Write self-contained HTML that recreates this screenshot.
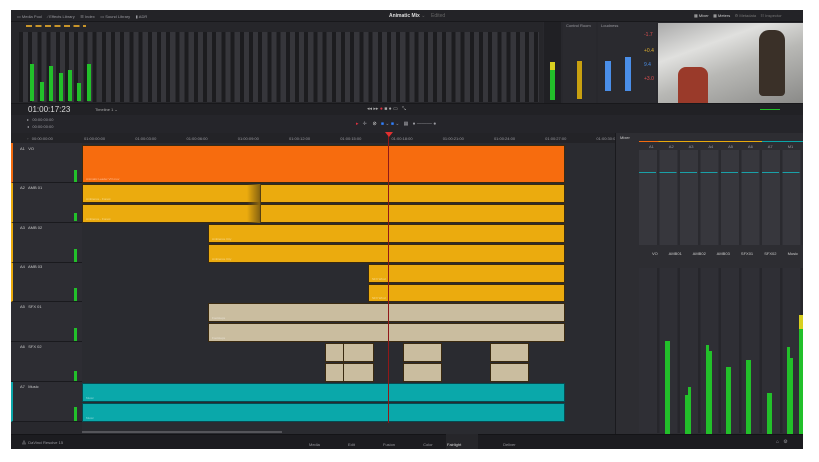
<!DOCTYPE html><html><head><meta charset="utf-8"><style>
*{margin:0;padding:0;box-sizing:border-box}
body{width:819px;height:462px;background:#fff;position:relative;overflow:hidden;font-family:"Liberation Sans",sans-serif;font-size:4px;color:#8a8a90}
div{position:absolute}
.app{left:11px;top:10px;width:792px;height:439px;background:#28282d;overflow:hidden}
.t{color:#9a9aa0;font-size:4px;white-space:nowrap}
.clip{border:1px solid #3a2a10}
.lbl{position:absolute;left:3px;bottom:1px;font-size:3px;color:#fff8;white-space:nowrap}
.g{background:#22c02a}
.hdr{left:0;width:71px;background:#2d2d33;border-bottom:1px solid #1a1a1e}
</style></head><body>
<div class="app">
 <div style="left:0;top:0;width:792px;height:12px;background:#232327;border-bottom:1px solid #18181b"></div>
 <div class="t" style="left:6px;top:4px">▭ Media Pool &nbsp;&nbsp;&nbsp; ⁄ Effects Library &nbsp;&nbsp;&nbsp; ☰ Index &nbsp;&nbsp;&nbsp; ▭ Sound Library &nbsp;&nbsp;&nbsp; ▮ ADR</div>
 <div class="t" style="left:378px;top:3px;color:#ddd;font-weight:bold;font-size:5px">Animatic Mix <span style="color:#666;font-weight:normal">⌄ &nbsp;&nbsp; Edited</span></div>
 <div class="t" style="left:683px;top:3px;color:#ccc">▦ Mixer &nbsp;&nbsp; ▦ Meters &nbsp;&nbsp;<span style="color:#777"> ⚙ Metadata &nbsp;&nbsp; ☷ Inspector</span></div>
 <div style="left:0;top:12px;width:532px;height:81px;background:#26262a"></div>
 <div style="left:8px;top:22px;width:520px;height:70px;background:repeating-linear-gradient(90deg,#1c1c1f 0 4px,#36363b 4px 9.2px)"></div>
 <div style="left:15px;top:15px;width:60px;height:2px;background:repeating-linear-gradient(90deg,#c8952a 0 6px,transparent 6px 9.5px)"></div>
 <div class="g" style="left:19px;top:54px;width:4px;height:37px"></div>
 <div class="g" style="left:29px;top:72px;width:4px;height:19px"></div>
 <div class="g" style="left:38px;top:56px;width:4px;height:35px"></div>
 <div class="g" style="left:48px;top:63px;width:4px;height:28px"></div>
 <div class="g" style="left:57px;top:60px;width:4px;height:31px"></div>
 <div class="g" style="left:66px;top:73px;width:4px;height:18px"></div>
 <div class="g" style="left:76px;top:54px;width:4px;height:37px"></div>
 <div style="left:533px;top:12px;width:17px;height:81px;background:#202024"></div>
 <div class="g" style="left:539px;top:52px;width:5px;height:38px"></div>
 <div style="left:539px;top:52px;width:5px;height:8px;background:#d8d020"></div>
 <div style="left:552px;top:12px;width:33px;height:81px;background:#2a2a2f"></div>
 <div class="t" style="left:555px;top:13px">Control Room</div>
 <div style="left:566px;top:51px;width:5px;height:38px;background:#c8a010"></div>
 <div style="left:587px;top:12px;width:58px;height:81px;background:#2a2a2f"></div>
 <div class="t" style="left:590px;top:13px">Loudness</div>
 <div style="left:594px;top:51px;width:6px;height:30px;background:#4a8ee8"></div>
 <div style="left:614px;top:47px;width:6px;height:34px;background:#4a8ee8"></div>
 <div class="t" style="left:633px;top:22px;color:#e05050;font-size:5px">-1.7</div>
 <div class="t" style="left:633px;top:38px;color:#e0b030;font-size:5px">+0.4</div>
 <div class="t" style="left:633px;top:52px;color:#4a8ee8;font-size:5px">9.4</div>
 <div class="t" style="left:633px;top:66px;color:#e05050;font-size:5px">+3.0</div>
 <div style="left:647px;top:13px;width:145px;height:80px;background:linear-gradient(160deg,#aaa 0%,#e0e0de 30%,#b8b8b5 55%,#8a8a88 100%)"></div>
 <div style="left:667px;top:57px;width:30px;height:36px;background:#9a3a2a;border-radius:8px 8px 0 0"></div>
 <div style="left:748px;top:20px;width:26px;height:66px;background:#3a3028;border-radius:10px 10px 4px 4px"></div>
 <div style="left:0;top:93px;width:792px;height:12px;background:#212125;border-top:1px solid #18181b"></div>
 <div class="t" style="left:17px;top:95px;font-size:8px;color:#ddd">01:00:17:23</div>
 <div class="t" style="left:84px;top:97px;color:#aaa">Timeline 1 ⌄</div>
 <div class="t" style="left:356px;top:96px;font-size:5px;color:#aaa">◂◂ ▸▸ <span style="color:#e03040">●</span> ■ ● ▭ &nbsp; ⤡</div>
 <div style="left:749px;top:99px;width:20px;height:1px;background:#22c02a"></div>
 <div style="left:0;top:105px;width:792px;height:18px;background:#25252a"></div>
 <div class="t" style="left:16px;top:107px">▸ &nbsp; 00:00:00:00</div>
 <div class="t" style="left:16px;top:114px">◂ &nbsp; 00:00:00:00</div>
 <div class="t" style="left:345px;top:111px;font-size:5px"><span style="color:#e03040">▸</span> &nbsp; ✛ &nbsp;&nbsp; <span style="color:#ddd">⊘</span> &nbsp; <span style="color:#3080ff">■</span> ⌄ <span style="color:#3080ff">■</span> ⌄ &nbsp; ▦ &nbsp; ● ——— ●</div>
 <div style="left:0;top:123px;width:604px;height:10px;background:#232327"></div>
 <div class="t" style="left:16px;top:126px">◦ &nbsp; 00:00:00:00</div>
 <div class="t" style="left:73px;top:126px;word-spacing:29px">01:00:00:00 01:00:03:00 01:00:06:00 01:00:09:00 01:00:12:00 01:00:15:00 01:00:18:00 01:00:21:00 01:00:24:00 01:00:27:00 01:00:30:00</div>
 <div style="left:71px;top:133px;width:533px;height:300px;background:#2a2b30"></div>
 <div class="hdr" style="top:133px;height:40px;border-left:2px solid #f26b0f"></div>
 <div class="hdr" style="top:173px;height:40px;border-left:2px solid #e9a90c"></div>
 <div class="hdr" style="top:213px;height:40px;border-left:2px solid #e9a90c"></div>
 <div class="hdr" style="top:253px;height:39px;border-left:2px solid #e9a90c"></div>
 <div class="hdr" style="top:292px;height:40px"></div>
 <div class="hdr" style="top:332px;height:40px"></div>
 <div class="hdr" style="top:372px;height:40px;border-left:2px solid #0aa5a8"></div>
 <div class="t" style="left:9px;top:136px;color:#ccc">A1 &nbsp; VO</div>
 <div class="t" style="left:9px;top:175px;color:#ccc">A2 &nbsp; AMB 01</div>
 <div class="t" style="left:9px;top:215px;color:#ccc">A3 &nbsp; AMB 02</div>
 <div class="t" style="left:9px;top:254px;color:#ccc">A4 &nbsp; AMB 03</div>
 <div class="t" style="left:9px;top:294px;color:#ccc">A5 &nbsp; SFX 01</div>
 <div class="t" style="left:9px;top:334px;color:#ccc">A6 &nbsp; SFX 02</div>
 <div class="t" style="left:9px;top:374px;color:#ccc">A7 &nbsp; Music</div>
 <div class="g" style="left:63px;top:160px;width:3px;height:12px"></div>
 <div class="g" style="left:63px;top:203px;width:3px;height:8px"></div>
 <div class="g" style="left:63px;top:239px;width:3px;height:13px"></div>
 <div class="g" style="left:63px;top:278px;width:3px;height:13px"></div>
 <div class="g" style="left:63px;top:318px;width:3px;height:13px"></div>
 <div class="g" style="left:63px;top:361px;width:3px;height:10px"></div>
 <div class="g" style="left:63px;top:397px;width:3px;height:14px"></div>
 <div class="clip" style="left:71px;top:135px;width:483px;height:38px;background:#f76c0e"><span class="lbl">Animatic Leader VO.mov</span></div>
 <div class="clip" style="left:71px;top:174px;width:483px;height:19px;background:#ebab0e"><span class="lbl">Ambience - Forest</span></div>
 <div class="clip" style="left:71px;top:194px;width:483px;height:19px;background:#ebab0e"><span class="lbl">Ambience - Forest</span></div>
 <div style="left:236px;top:174px;width:14px;height:39px;background:linear-gradient(90deg,#ebab0e00,#8a6510 90%,#3a2a10)"></div>
 <div class="clip" style="left:197px;top:214px;width:357px;height:19px;background:#ebab0e"><span class="lbl">Ambience City</span></div>
 <div class="clip" style="left:197px;top:234px;width:357px;height:19px;background:#ebab0e"><span class="lbl">Ambience City</span></div>
 <div class="clip" style="left:357px;top:254px;width:197px;height:19px;background:#ebab0e"><span class="lbl">SFX Wind</span></div>
 <div class="clip" style="left:357px;top:274px;width:197px;height:18px;background:#ebab0e"><span class="lbl">SFX Wind</span></div>
 <div class="clip" style="left:197px;top:293px;width:357px;height:19px;background:#cabd9f"><span class="lbl">Footsteps</span></div>
 <div class="clip" style="left:197px;top:313px;width:357px;height:19px;background:#cabd9f"><span class="lbl">Footsteps</span></div>
 <div class="clip" style="left:314px;top:333px;width:49px;height:19px;background:#cabd9f"></div>
 <div class="clip" style="left:314px;top:353px;width:49px;height:19px;background:#cabd9f"></div>
 <div style="left:332px;top:333px;width:1px;height:39px;background:#3a2a10"></div>
 <div class="clip" style="left:392px;top:333px;width:39px;height:19px;background:#cabd9f"></div>
 <div class="clip" style="left:392px;top:353px;width:39px;height:19px;background:#cabd9f"></div>
 <div class="clip" style="left:479px;top:333px;width:39px;height:19px;background:#cabd9f"></div>
 <div class="clip" style="left:479px;top:353px;width:39px;height:19px;background:#cabd9f"></div>
 <div class="clip" style="left:71px;top:373px;width:483px;height:19px;background:#0aa8aa;border-color:#064a50"><span class="lbl">Music</span></div>
 <div class="clip" style="left:71px;top:393px;width:483px;height:19px;background:#0aa8aa;border-color:#064a50"><span class="lbl">Music</span></div>
 <div style="left:377px;top:123px;width:1px;height:290px;background:#901818"></div>
 <div style="left:374px;top:122px;width:0;height:0;border-left:4px solid transparent;border-right:4px solid transparent;border-top:5px solid #e03030"></div>
 <div style="left:71px;top:421px;width:200px;height:2px;background:#55555a"></div>
 <div style="left:604px;top:123px;width:188px;height:310px;background:#2d2d32;border-left:1px solid #1a1a1e"></div>
 <div class="t" style="left:609px;top:125px;color:#ccc">Mixer</div>
 <div style="left:628px;top:131px;width:164px;height:1px;background:linear-gradient(90deg,#f26b0f 0 12%,#e9a90c 12% 75%,#0aa5a8 75%)"></div>
 <div class="t" style="left:638px;top:134px;word-spacing:14px">A1 A2 A3 A4 A5 A6 A7 M1</div>
 <div style="left:628px;top:140px;width:164px;height:95px;background:repeating-linear-gradient(90deg,#37373d 0 18px,#2a2a2f 18px 20.5px)"></div>
 <div style="left:628px;top:162px;width:164px;height:1px;background:repeating-linear-gradient(90deg,#1aa0a8 0 17px,transparent 17px 20.5px)"></div>
 <div class="t" style="left:641px;top:241px;word-spacing:10px;color:#ccc">VO AMB01 AMB02 AMB03 SFX01 SFX02 Music Main1</div>
 <div style="left:628px;top:258px;width:164px;height:165px;background:repeating-linear-gradient(90deg,#2f2f35 0 18px,#26262b 18px 20.5px)"></div>
 <div class="g" style="left:654px;top:331px;width:5px;height:96px"></div>
 <div class="g" style="left:674px;top:385px;width:3px;height:42px"></div>
 <div class="g" style="left:677px;top:377px;width:3px;height:50px"></div>
 <div class="g" style="left:695px;top:335px;width:3px;height:92px"></div>
 <div class="g" style="left:698px;top:341px;width:3px;height:86px"></div>
 <div class="g" style="left:715px;top:357px;width:5px;height:70px"></div>
 <div class="g" style="left:735px;top:350px;width:5px;height:77px"></div>
 <div class="g" style="left:756px;top:383px;width:5px;height:44px"></div>
 <div class="g" style="left:776px;top:337px;width:3px;height:90px"></div>
 <div class="g" style="left:779px;top:348px;width:3px;height:79px"></div>
 <div class="g" style="left:788px;top:319px;width:4px;height:108px"></div>
 <div style="left:788px;top:305px;width:4px;height:14px;background:#d8d020"></div>
 <div style="left:0;top:424px;width:792px;height:15px;background:#1c1c20;border-top:1px solid #141417"></div>
 <div class="t" style="left:11px;top:430px">⁂ &nbsp;DaVinci Resolve 15</div>
 <div class="t" style="left:298px;top:432px;word-spacing:27px">Media Edit Fusion Color <span style="color:#ddd">Fairlight</span> Deliver</div>
 <div style="left:435px;top:424px;width:32px;height:15px;background:#26262a"></div>
 <div class="t" style="left:436px;top:432px;color:#ddd">Fairlight</div>
 <div class="t" style="left:765px;top:429px;font-size:5px">⌂ &nbsp; ⚙</div>
</div>
</body></html>
